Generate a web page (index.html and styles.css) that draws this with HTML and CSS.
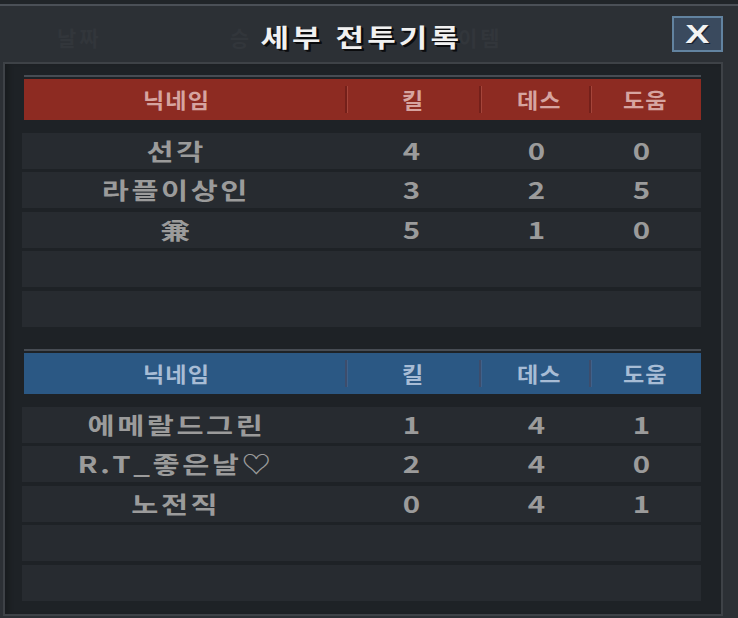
FILE: index.html
```html
<!DOCTYPE html>
<html lang="ko">
<head>
<meta charset="utf-8">
<title>세부 전투기록</title>
<link rel="stylesheet" href="styles.css">
</head>
<body>
<div class="app">
  <div class="topline"></div>
  <header class="titlebar">
    <div class="ghosts" aria-hidden="true">
      <span class="g g1">날짜</span>
      <span class="g g2">승</span>
      <span class="g g3">이템</span>
    </div>
    <h1 class="title"><span>세부 전투기록</span></h1>
    <button class="close" type="button"><span>X</span></button>
  </header>
  <main class="panel">
    <section class="team red">
      <div class="rule"></div>
      <div class="head">
        <div class="hc hname"><span>닉네임</span></div>
        <div class="hc hkill"><span>킬</span></div>
        <div class="hc hdeath"><span>데스</span></div>
        <div class="hc hassist"><span>도움</span></div>
      </div>
      <div class="rows">
        <div class="row"><div class="c name"><span>선각</span></div><div class="c"><span>4</span></div><div class="c"><span>0</span></div><div class="c assist"><span>0</span></div></div>
        <div class="row"><div class="c name"><span>라플이상인</span></div><div class="c"><span>3</span></div><div class="c"><span>2</span></div><div class="c assist"><span>5</span></div></div>
        <div class="row"><div class="c name"><span>兼</span></div><div class="c"><span>5</span></div><div class="c"><span>1</span></div><div class="c assist"><span>0</span></div></div>
        <div class="row"></div>
        <div class="row"></div>
      </div>
    </section>
    <section class="team blue">
      <div class="rule"></div>
      <div class="head">
        <div class="hc hname"><span>닉네임</span></div>
        <div class="hc hkill"><span>킬</span></div>
        <div class="hc hdeath"><span>데스</span></div>
        <div class="hc hassist"><span>도움</span></div>
      </div>
      <div class="rows">
        <div class="row"><div class="c name"><span>에메랄드그린</span></div><div class="c"><span>1</span></div><div class="c"><span>4</span></div><div class="c assist"><span>1</span></div></div>
        <div class="row"><div class="c name"><span>R.T_좋은날♡</span></div><div class="c"><span>2</span></div><div class="c"><span>4</span></div><div class="c assist"><span>0</span></div></div>
        <div class="row"><div class="c name"><span>노전직</span></div><div class="c"><span>0</span></div><div class="c"><span>4</span></div><div class="c assist"><span>1</span></div></div>
        <div class="row"></div>
        <div class="row"></div>
      </div>
    </section>
  </main>
</div>
</body>
</html>
```
FILE: styles.css
```css
* { box-sizing: border-box; }

html, body {
  margin: 0;
  padding: 0;
}

body {
  width: 738px;
  height: 618px;
  overflow: hidden;
  background: #23272b;
  font-family: "Noto Sans CJK KR", "Noto Sans", sans-serif;
}

.app {
  width: 738px;
  height: 618px;
  background: #2c3035;
  display: flex;
  flex-direction: column;
}

.topline {
  height: 6px;
  background: #212529;
  border-bottom: 2px solid #4b5057;
  flex: none;
}

.titlebar {
  position: relative;
  height: 56px;
  flex: none;
  display: grid;
  grid-template-columns: 1fr auto 1fr;
  align-items: center;
}

.ghosts {
  position: absolute;
  inset: 0;
  display: flex;
  align-items: center;
  padding-top: 6px;
  color: #32363b;
  font-size: 21px;
  font-weight: 700;
  letter-spacing: 3px;
  z-index: 0;
}
.g1 { margin-left: 57px; }
.g2 { margin-left: 128px; }
.g3 { margin-left: 206px; }

.title {
  grid-column: 2;
  margin: 0 16px 0 0;
  padding-top: 4px;
  position: relative;
  z-index: 1;
  font-size: 25px;
  font-weight: 700;
  color: #f1f1f1;
  line-height: 30px;
  text-shadow: 2px 2px 0 #0b0c0e, 1px 1px 0 #0b0c0e;
}
.title span {
  display: inline-block;
  transform: scaleX(1.24);
  letter-spacing: 2.5px;
}

.close {
  grid-column: 3;
  justify-self: end;
  margin: 0 15px 0 0;
  width: 51px;
  height: 36px;
  padding: 0;
  background: #3a4a5e;
  border: 2px solid #6283a0;
  border-radius: 0;
  display: flex;
  align-items: center;
  justify-content: center;
  position: relative;
  z-index: 1;
  font-family: "Liberation Sans", Arial, sans-serif;
  font-size: 25px;
  font-weight: 700;
  color: #f2f2f2;
  text-shadow: 1px 1px 0 #1a2230;
  line-height: 1;
}
.close span {
  display: inline-block;
  transform: scaleX(1.45);
}

.panel {
  flex: none;
  margin-left: 3px;
  width: 720px;
  height: 554px;
  background: #1e2226;
  border: 2px solid #3e4247;
  box-shadow: inset 6px 0 4px -2px #191c1f;
  padding: 11px 20px 13px 17px;
  display: flex;
  flex-direction: column;
  gap: 22.5px;
}

.team {
  display: flex;
  flex-direction: column;
}

.rule {
  height: 2px;
  margin-left: 2px;
  background: #474c53;
}

.head {
  margin: 2px 0 12.5px 2px;
  height: 41px;
  display: grid;
  grid-template-columns: 321px 134px 110px 112px;
  align-items: center;
}
.red .head { background: #8d2b22; color: #d6a4a0; }
.blue .head { background: #2b5884; color: #a7bcd5; }

.hc {
  height: 27px;
  line-height: 27px;
  text-align: center;
  font-size: 21px;
  font-weight: 700;
}
.hc span {
  display: inline-block;
  transform: scaleX(1.1);
  letter-spacing: 1px;
}
.hname { padding-right: 17px; }
.hdeath { padding-left: 8px; }
.hassist { padding-right: 2px; }

.red .hkill, .red .hdeath, .red .hassist {
  border-left: 2px solid #74201a;
  box-shadow: inset 1px 0 0 #a5453a;
}
.blue .hkill, .blue .hdeath, .blue .hassist {
  border-left: 2px solid #3d4d6c;
  box-shadow: inset 1px 0 0 #40618a;
}

.rows {
  display: flex;
  flex-direction: column;
  gap: 3.5px;
}

.row {
  height: 36px;
  background: #272b30;
  display: grid;
  grid-template-columns: 308px 166px 84px 121px;
  align-items: center;
}

.c {
  text-align: center;
  line-height: 34px;
  padding-bottom: 2px;
  font-size: 23px;
  font-weight: 700;
  color: #9b9b9b;
}
.c span {
  display: inline-block;
  transform: scaleX(1.28);
  letter-spacing: 2px;
}
.assist { padding-left: 5px; }
```
